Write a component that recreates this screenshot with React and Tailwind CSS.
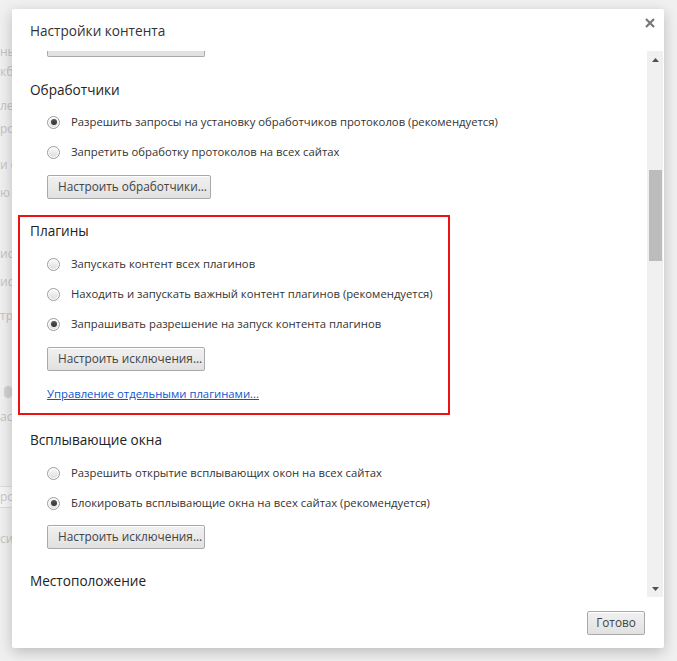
import React from "react";

const font = { fontFamily: '"Open Sans", "Noto Sans", sans-serif' };

function Radio({ checked, label }) {
  return (
    <div className="flex h-[30px] items-center pl-[17px]">
      <span className="flex h-[13px] w-[13px] shrink-0 items-center justify-center rounded-full border border-[#9c9c9c] bg-gradient-to-b from-[#fafafa] to-[#dcdcdc] shadow-[inset_0_0_0_1px_#fff]">
        {checked && <span className="h-[6px] w-[6px] rounded-full bg-gradient-to-b from-[#555] to-[#333]" />}
      </span>
      <span className="ml-[11px] text-[11.3px] text-[#333] whitespace-nowrap">{label}</span>
    </div>
  );
}

function Btn({ children, w, className = "" }) {
  return (
    <div
      className={`flex h-[24px] items-center rounded-[2px] border border-[#a9a9a9] bg-gradient-to-b from-[#f1f1f1] to-[#e1e1e1] px-[10px] text-[11.8px] text-[#444] shadow-[inset_0_1px_0_#fff] whitespace-nowrap ${className}`}
      style={{ width: w }}
    >
      {children}
    </div>
  );
}

function Heading({ children, className = "" }) {
  return <div className={`h-[20px] leading-[20px] text-[13.6px] text-[#222] ${className}`}>{children}</div>;
}

const bgItems = [
  { t: "ны", y: 46 },
  { t: "кбы", y: 66 },
  { t: "ле", y: 100 },
  { t: "ро", y: 123 },
  { t: "и с", y: 159 },
  { t: "ю", y: 187 },
  { t: "ис", y: 248 },
  { t: "ис", y: 276 },
  { t: "тра", y: 310 },
  { t: "аст", y: 411 },
  { t: "си", y: 533 },
];

export default function App() {
  return (
    <div className="relative h-[661px] w-[677px] overflow-hidden bg-[#f0f0f0]" style={font}>
      {/* background page */}
      <div className="relative h-full w-full">
        {bgItems.map((b, i) => (
          <div
            key={i}
            className="absolute left-0 text-[12px] leading-[12px] text-[#c4c4c4]"
            style={{ top: b.y }}
          >
            {b.t}
          </div>
        ))}
        <div className="absolute left-0 top-[486px] h-[22px] w-[14px] border-y border-[#dcdcdc] bg-[#f6f6f6] text-[12px] leading-[20px] text-[#c8c8c8]">ро</div>
        <div className="absolute left-[4px] top-[386px] h-[12px] w-[8px] rounded-sm bg-[#d2d2d2]" />
      </div>

      {/* dialog */}
      <div className="absolute left-[12px] top-[9px] flex h-[639px] w-[652px] flex-col rounded-[2px] bg-white shadow-[0_4px_14px_rgba(0,0,0,0.22)]">
        {/* header */}
        <div className="relative flex h-[42px] shrink-0 items-start pl-[18px] pt-[12px]">
          <div className="text-[13.6px] leading-[20px] text-[#333]">Настройки контента</div>
          <svg className="absolute right-[9px] top-[9px]" width="10" height="10" viewBox="0 0 10 10">
            <path d="M1 1 L9 9 M9 1 L1 9" stroke="#777" strokeWidth="2.2" />
          </svg>
        </div>

        {/* scroll area */}
        <div className="flex h-[546px] shrink-0">
          <div className="flex-1 overflow-hidden pl-[18px]">
            <div className="ml-[17px] h-[6px] w-[158px] rounded-b-[2px] border-x border-b border-[#a9a9a9] bg-[#e2e2e2]" />

            <Heading className="mt-[23px]">Обработчики</Heading>
            <div className="mt-[7px]">
              <Radio checked label="Разрешить запросы на установку обработчиков протоколов (рекомендуется)" />
              <Radio label="Запретить обработку протоколов на всех сайтах" />
            </div>
            <div className="mt-[8px] ml-[17px]">
              <Btn w={164}>Настроить обработчики...</Btn>
            </div>

            <div className="mt-[16px] ml-[-12px] w-[432px] border-2 border-[#ee1111] pl-[10px] pt-[4px] pb-[9px]">
              <Heading>Плагины</Heading>
              <div className="mt-[8px]">
                <Radio label="Запускать контент всех плагинов" />
                <Radio label="Находить и запускать важный контент плагинов (рекомендуется)" />
                <Radio checked label="Запрашивать разрешение на запуск контента плагинов" />
              </div>
              <div className="mt-[8px] ml-[17px]">
                <Btn w={158}>Настроить исключения...</Btn>
              </div>
              <div className="mt-[13px] ml-[17px] h-[20px] text-[11.3px] leading-[20px] text-[#1155cc] underline">
                Управление отдельными плагинами...
              </div>
            </div>

            <Heading className="mt-[15px]">Всплывающие окна</Heading>
            <div className="mt-[8px]">
              <Radio label="Разрешить открытие всплывающих окон на всех сайтах" />
              <Radio checked label="Блокировать всплывающие окна на всех сайтах (рекомендуется)" />
            </div>
            <div className="mt-[7px] ml-[17px]">
              <Btn w={158}>Настроить исключения...</Btn>
            </div>

            <Heading className="mt-[22px]">Местоположение</Heading>
          </div>

          {/* scrollbar */}
          <div className="mr-[1px] flex w-[16px] flex-col items-center bg-[#f0f0f0]">
            <div className="flex h-[17px] w-full items-center justify-center">
              <svg width="7" height="4" viewBox="0 0 7 4"><path d="M0 4 L3.5 0 L7 4 Z" fill="#505050" /></svg>
            </div>
            <div className="mt-[102px] h-[91px] w-[13px] bg-[#bcbcbc]" />
            <div className="flex-1" />
            <div className="flex h-[17px] w-full items-center justify-center">
              <svg width="7" height="4" viewBox="0 0 7 4"><path d="M0 0 L7 0 L3.5 4 Z" fill="#505050" /></svg>
            </div>
          </div>
        </div>

        {/* footer */}
        <div className="flex flex-1 items-start justify-end pr-[19px] pt-[14px]">
          <Btn w={58} className="justify-center px-0">Готово</Btn>
        </div>
      </div>
    </div>
  );
}
